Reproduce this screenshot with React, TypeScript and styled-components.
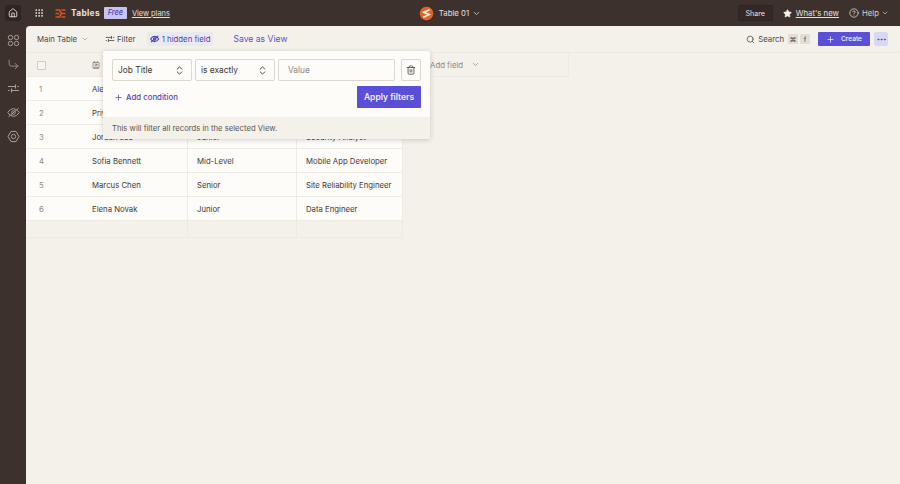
import React from 'react';
import styled, { createGlobalStyle } from 'styled-components';
import {
  Home,
  Grip,
  Star,
  CircleHelp,
  ChevronDown,
  ChevronsUpDown,
  Search,
  Plus,
  Ellipsis,
  Trash2,
  CornerDownRight,
  Contact,
} from 'lucide-react';

const GlobalStyle = createGlobalStyle`
  html, body { margin: 0; padding: 0; background: #3d312e; }
  * { box-sizing: border-box; }
  body { font-family: Inter, "Liberation Sans", sans-serif; }
`;

const Page = styled.div`
  width: 900px;
  height: 484px;
  overflow: hidden;
  display: flex;
  flex-direction: column;
  background: #3d312e;
`;

const TopBar = styled.header`
  height: 26px;
  flex: none;
  display: grid;
  grid-template-columns: 1fr auto 1fr;
  align-items: center;
  color: #f4f1ea;
  font-size: 8px;
`;

const TopLeft = styled.div`
  display: flex;
  align-items: center;
  padding-left: 5px;
`;

const HomeButton = styled.div`
  width: 16px;
  height: 16px;
  border-radius: 3px;
  background: #2e2422;
  display: flex;
  align-items: center;
  justify-content: center;
  margin-right: 13px;
`;

const GridSlot = styled.span`
  display: flex;
  margin-right: 11px;
`;

const Brand = styled.span`
  font-weight: 700;
  font-size: 8.4px;
  letter-spacing: 0.3px;
  margin: 0 4px 0 5px;
  color: #e6e1da;
`;

const FreeBadge = styled.span`
  width: 23px;
  background: #c9c3f2;
  color: #4a3fb0;
  font-size: 7.4px;
  font-style: italic;
  font-weight: 500;
  text-align: center;
  border-radius: 1px;
  margin-right: 5px;
  line-height: 12px;
`;

const TopLink = styled.a<{ $size?: number }>`
  color: #e6e1da;
  text-decoration: underline;
  font-size: ${(p) => p.$size ?? 7.4}px;
`;

const TopCenter = styled.div`
  display: flex;
  align-items: center;
  gap: 5px;
  font-size: 7.8px;
  color: #e6e1da;
`;

const CenterChevron = styled.span`
  display: flex;
  margin-left: -2px;
`;

const TopRight = styled.div`
  display: flex;
  align-items: center;
  justify-content: flex-end;
  padding-right: 11px;
`;

const ShareButton = styled.div`
  width: 35px;
  height: 16px;
  background: #332826;
  border: 1px solid #2e2422;
  border-radius: 2px;
  font-size: 7.2px;
  color: #e6e1da;
  display: flex;
  align-items: center;
  justify-content: center;
  margin-right: 10px;
`;

const StarSlot = styled.span`
  display: flex;
  margin-right: 4px;
`;

const HelpItem = styled.span`
  display: flex;
  align-items: center;
  gap: 3px;
  margin-left: 10px;
  color: #d6d0c8;
  font-size: 7.8px;
`;

const HelpChevron = styled.span`
  display: flex;
  margin-left: -1px;
`;

const Body = styled.div`
  flex: 1;
  display: flex;
  min-height: 0;
`;

const SideRail = styled.nav`
  width: 26px;
  flex: none;
  display: flex;
  flex-direction: column;
  align-items: center;
  gap: 11px;
  padding-top: 8px;
  color: #a89f98;
`;

const Main = styled.main`
  flex: 1;
  position: relative;
  background: #f4f1ea;
  border-top-left-radius: 4px;
  overflow: hidden;
`;

const Toolbar = styled.div`
  height: 27px;
  display: flex;
  align-items: center;
  padding: 0 12px 0 11px;
  font-size: 7.8px;
  color: #4f4845;
  border-bottom: 1px solid #eeebe3;
`;

const ToolItem = styled.span`
  display: flex;
  align-items: center;
  gap: 3px;
`;

const FilterItem = styled(ToolItem)`
  gap: 2px;
`;

const MainTable = styled(ToolItem)`
  width: 68px;
  gap: 4px;
`;

const HiddenField = styled(ToolItem)`
  margin-left: 12px;
  width: 66px;
  padding: 2px 3px;
  gap: 2px;
  background: #ebe9f0;
  border-radius: 2px;
  color: #4b3fae;
  white-space: nowrap;
`;

const SaveView = styled.span`
  margin-left: 20px;
  color: #5b50c8;
  font-size: 8.6px;
`;

const ToolSpacer = styled.div`
  flex: 1;
`;

const KeyCap = styled.span`
  width: 10px;
  height: 10px;
  margin-left: 2px;
  background: #e2ded5;
  border-radius: 1px;
  font-size: 7px;
  display: flex;
  align-items: center;
  justify-content: center;
`;

const FirstKeyCap = styled(KeyCap)`
  margin-left: 4px;
`;

const CreateButton = styled.div`
  width: 52px;
  height: 14px;
  margin-left: 8px;
  background: #5a4fd6;
  color: #f4f1ea;
  font-size: 6.6px;
  font-weight: 500;
  border-radius: 1px;
  display: flex;
  align-items: center;
  justify-content: center;
  gap: 6px;
`;

const MoreButton = styled.div`
  width: 14px;
  height: 14px;
  margin-left: 4px;
  background: #d9d8f3;
  color: #4b3fae;
  border-radius: 2px;
  display: flex;
  align-items: center;
  justify-content: center;
`;

const Row = styled.div<{ $white?: boolean; $height?: number }>`
  display: grid;
  grid-template-columns: 56px 106px 109px 106px;
  width: 377px;
  height: ${(p) => p.$height ?? 24}px;
  background: ${(p) => (p.$white ? '#fdfcf8' : '#f4f1ea')};
  border-bottom: 1px solid #eeebe3;
  font-size: 7.75px;
  color: #3d3633;
`;

const HeaderRow = styled(Row)`
  grid-template-columns: 56px 106px 109px 106px 166px;
  width: 543px;
`;

const Cell = styled.div`
  display: flex;
  align-items: center;
  padding-left: 9px;
  border-right: 1px solid #eeebe3;
`;

const NameCell = styled(Cell)`
  padding-left: 10px;
`;

const IndexCell = styled(Cell)`
  padding-left: 13px;
  color: #8f8984;
  border-right: none;
`;

const Checkbox = styled.span`
  width: 9px;
  height: 9px;
  margin-left: -2px;
  margin-top: 1px;
  background: #f7f5ef;
  border: 1px solid #cfcbc3;
  border-radius: 1px;
`;

const AddField = styled(Cell)`
  color: #8f8984;
  gap: 8px;
  padding-left: 27px;
  font-size: 7.8px;
`;

const Popover = styled.div`
  position: absolute;
  left: 77px;
  top: 25px;
  width: 327px;
  height: 88px;
  background: #fdfcf8;
  border-radius: 2px;
  box-shadow: 0 1px 5px rgba(60, 50, 45, 0.22);
  display: flex;
  flex-direction: column;
  z-index: 2;
`;

const PopoverBody = styled.div`
  flex: 1;
  padding: 8px 9px 0 9px;
`;

const FilterRow = styled.div`
  display: flex;
  height: 22px;
  gap: 3px;
`;

const SelectBox = styled.div`
  width: 80px;
  display: flex;
  align-items: center;
  justify-content: space-between;
  padding: 0 6px 0 5px;
  border: 1px solid #dcd8d0;
  border-radius: 2px;
  font-size: 8.4px;
  color: #3d3633;
`;

const ValueBox = styled.div`
  width: 117px;
  display: flex;
  align-items: center;
  padding-left: 9px;
  border: 1px solid #dcd8d0;
  border-radius: 2px;
  font-size: 8.4px;
  color: #8f8984;
`;

const TrashButton = styled.div`
  width: 20px;
  margin-left: 3px;
  display: flex;
  align-items: center;
  justify-content: center;
  border: 1px solid #dcd8d0;
  border-radius: 2px;
  color: #4f4845;
`;

const ActionRow = styled.div`
  display: flex;
  align-items: center;
  justify-content: space-between;
  margin-top: 5px;
`;

const AddCondition = styled.span`
  display: flex;
  align-items: center;
  gap: 3px;
  margin-left: 2px;
  color: #5546b5;
  font-size: 7.8px;
  font-weight: 500;
`;

const ApplyButton = styled.div`
  width: 64px;
  height: 22px;
  background: #5a4fd6;
  color: #f4f1ea;
  font-size: 8.5px;
  font-weight: 600;
  border-radius: 1px;
  display: flex;
  align-items: center;
  justify-content: center;
`;

const PopoverNote = styled.div`
  height: 22px;
  padding-left: 9px;
  display: flex;
  align-items: center;
  background: #f4f1ea;
  font-size: 7.7px;
  color: #5c5552;
`;

const LogoMark = () => (
  <svg width="15" height="15" viewBox="0 0 15 15">
    <circle cx="7.5" cy="7.5" r="7.2" fill="#e2622a" stroke="#2a1e1a" strokeWidth="0.6" />
    <path d="M10.6 3.8 5 6.2 10 8.6 4.4 11.2" fill="none" stroke="#fdf6ec" strokeWidth="1.7" />
  </svg>
);

const TablesMark = () => (
  <svg width="11" height="11" viewBox="0 0 11 11" fill="none" stroke="#d9531e" strokeWidth="1.7">
    <path d="M0.5 2H4.5L6.5 5.5H10.5" />
    <path d="M4 5.5H0.5M6.5 2H10.5" />
    <path d="M0.5 9H4.5L6.5 5.5M6.5 9H10.5" />
  </svg>
);

const CirclesIcon = () => (
  <svg width="13" height="13" viewBox="0 0 13 13" fill="none" stroke="currentColor" strokeWidth="1">
    <circle cx="3.5" cy="3.5" r="2.2" />
    <circle cx="9.5" cy="3.5" r="2.2" />
    <circle cx="3.5" cy="9.5" r="2.2" />
    <circle cx="9.5" cy="9.5" r="2.2" />
  </svg>
);

const SlidersIcon = ({ size = 13 }: { size?: number }) => (
  <svg width={size} height={size} viewBox="0 0 13 13" fill="none" stroke="currentColor" strokeWidth="1.1">
    <path d="M1 4.5H8M10.5 4.5H12M8.5 2.5V6.5" />
    <path d="M1 8.5H2.5M5 8.5H12M4.5 6.5V10.5" />
  </svg>
);

const HiddenEyeIcon = ({ size = 13, weight = 1 }: { size?: number; weight?: number }) => (
  <svg width={size} height={size} viewBox="0 0 13 13" fill="none" stroke="currentColor" strokeWidth={weight}>
    <path d="M0.8 6.5C2.4 3.9 4.3 2.8 6.5 2.8S10.6 3.9 12.2 6.5C10.6 9.1 8.7 10.2 6.5 10.2S2.4 9.1 0.8 6.5Z" />
    <circle cx="6.5" cy="6.5" r="1.8" />
    <path d="M1.5 10.8 11.5 2.2" />
  </svg>
);

const HexGearIcon = () => (
  <svg width="13" height="13" viewBox="0 0 13 13" fill="none" stroke="currentColor" strokeWidth="1">
    <path d="M4 1.4H9L12 6.5 9 11.6H4L1 6.5Z" strokeLinejoin="round" />
    <circle cx="6.5" cy="6.5" r="2.2" />
  </svg>
);

const people = [
  ['Alex Morgan', 'Senior', 'Frontend Developer'],
  ['Priya Sharma', 'Mid-Level', 'Backend Developer'],
  ['Jordan Lee', 'Junior', 'Security Analyst'],
  ['Sofia Bennett', 'Mid-Level', 'Mobile App Developer'],
  ['Marcus Chen', 'Senior', 'Site Reliability Engineer'],
  ['Elena Novak', 'Junior', 'Data Engineer'],
];

const App = () => {
  return (
    <Page>
      <GlobalStyle />
      <TopBar>
        <TopLeft>
          <HomeButton>
            <Home size={10} />
          </HomeButton>
          <GridSlot>
            <Grip size={10} />
          </GridSlot>
          <TablesMark />
          <Brand>Tables</Brand>
          <FreeBadge>Free</FreeBadge>
          <TopLink>View plans</TopLink>
        </TopLeft>
        <TopCenter>
          <LogoMark />
          <span>Table 01</span>
          <CenterChevron>
            <ChevronDown size={9} />
          </CenterChevron>
        </TopCenter>
        <TopRight>
          <ShareButton>Share</ShareButton>
          <StarSlot>
            <Star size={9} fill="currentColor" />
          </StarSlot>
          <TopLink $size={7.8}>What's new</TopLink>
          <HelpItem>
            <CircleHelp size={10} />
            Help
            <HelpChevron>
              <ChevronDown size={8} />
            </HelpChevron>
          </HelpItem>
        </TopRight>
      </TopBar>
      <Body>
        <SideRail>
          <CirclesIcon />
          <CornerDownRight size={13} strokeWidth={1.5} />
          <SlidersIcon />
          <HiddenEyeIcon />
          <HexGearIcon />
        </SideRail>
        <Main>
          <Toolbar>
            <MainTable>
              Main Table <ChevronDown size={8} color="#9a948e" />
            </MainTable>
            <FilterItem>
              <SlidersIcon size={10} />
              Filter
            </FilterItem>
            <HiddenField>
              <HiddenEyeIcon size={10} weight={1.5} />1 hidden field
            </HiddenField>
            <SaveView>Save as View</SaveView>
            <ToolSpacer />
            <ToolItem>
              <Search size={9} />
              Search
            </ToolItem>
            <FirstKeyCap>⌘</FirstKeyCap>
            <KeyCap>f</KeyCap>
            <CreateButton>
              <Plus size={9} />
              Create
            </CreateButton>
            <MoreButton>
              <Ellipsis size={11} />
            </MoreButton>
          </Toolbar>
          <HeaderRow>
            <IndexCell>
              <Checkbox />
            </IndexCell>
            <NameCell>
              <Contact size={8} color="#6b6461" />
            </NameCell>
            <Cell />
            <Cell />
            <AddField>
              Add field <ChevronDown size={9} />
            </AddField>
          </HeaderRow>
          {people.map((person, i) => (
            <Row key={person[0]} $white>
              <IndexCell>{i + 1}</IndexCell>
              <NameCell>{person[0]}</NameCell>
              <Cell>{person[1]}</Cell>
              <Cell>{person[2]}</Cell>
            </Row>
          ))}
          <Row $height={17}>
            <IndexCell />
            <Cell />
            <Cell />
            <Cell />
          </Row>
          <Popover>
            <PopoverBody>
              <FilterRow>
                <SelectBox>
                  Job Title <ChevronsUpDown size={11} />
                </SelectBox>
                <SelectBox>
                  is exactly <ChevronsUpDown size={11} />
                </SelectBox>
                <ValueBox>Value</ValueBox>
                <TrashButton>
                  <Trash2 size={10} />
                </TrashButton>
              </FilterRow>
              <ActionRow>
                <AddCondition>
                  <Plus size={9} />
                  Add condition
                </AddCondition>
                <ApplyButton>Apply filters</ApplyButton>
              </ActionRow>
            </PopoverBody>
            <PopoverNote>This will filter all records in the selected View.</PopoverNote>
          </Popover>
        </Main>
      </Body>
    </Page>
  );
};

export default App;
